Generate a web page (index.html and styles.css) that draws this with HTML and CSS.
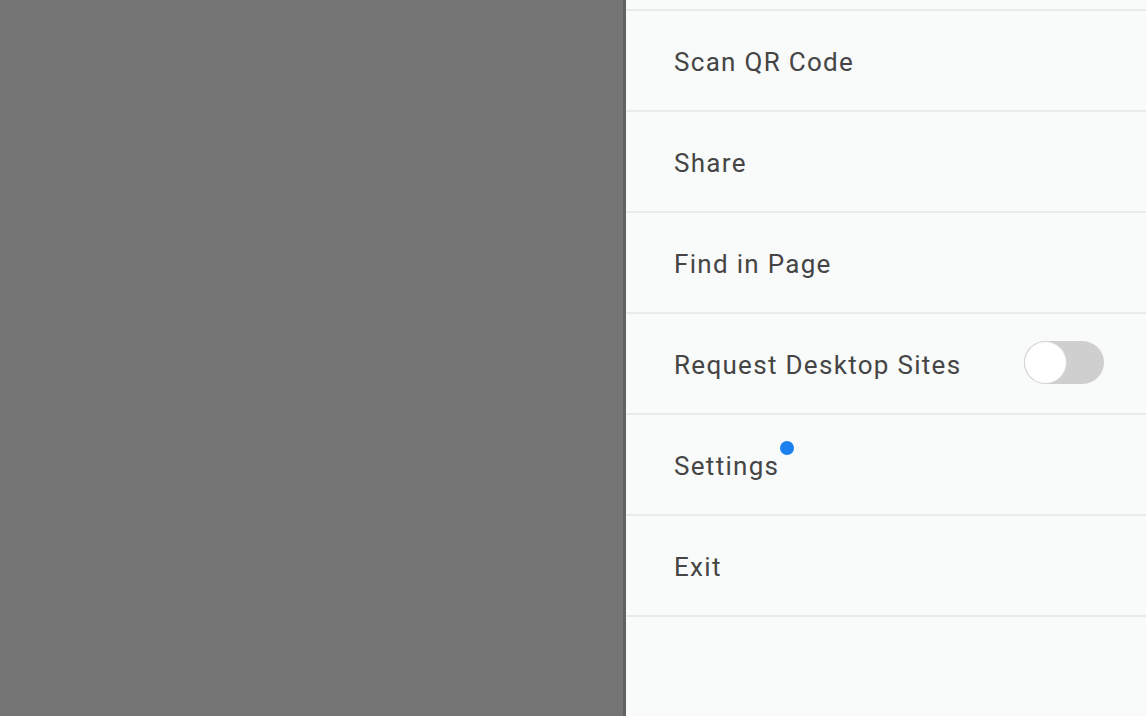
FILE: index.html
```html
<!DOCTYPE html>
<html>
<head>
<meta charset="utf-8">
<link rel="stylesheet" href="styles.css">
</head>
<body>
<div class="screen">
  <div class="scrim"></div>
  <div class="panel">
    <div class="row"><span class="label">Scan QR Code</span></div>
    <div class="row"><span class="label">Share</span></div>
    <div class="row"><span class="label">Find in Page</span></div>
    <div class="row row-toggle"><span class="label">Request Desktop Sites</span><span class="toggle"><span class="knob"></span></span></div>
    <div class="row"><span class="label badge-wrap">Settings<span class="badge"></span></span></div>
    <div class="row"><span class="label">Exit</span></div>
    <div class="row row-empty"></div>
  </div>
</div>
</body>
</html>
```

FILE: styles.css
```css
html, body {
  margin: 0;
  padding: 0;
  width: 1146px;
  height: 716px;
  overflow: hidden;
}
.screen {
  display: flex;
  width: 1146px;
  height: 716px;
  font-family: Roboto, "Noto Sans", sans-serif;
}
.scrim {
  width: 623px;
  background: #757575;
  flex: none;
}
.panel {
  flex: 1;
  background: #f9fafa;
  border-left: 3px solid #626262;
  padding-top: 9px;
  display: flex;
  flex-direction: column;
}
.row {
  height: 99px;
  border-top: 2px solid #e9eaea;
  display: flex;
  align-items: center;
  justify-content: space-between;
  padding: 0 42px 0 48px;
  flex: none;
}
.row-empty {
  flex: 1;
}
.label {
  font-size: 26px;
  color: #454545;
  letter-spacing: 1.3px;
  margin-top: 3px;
}
.badge-wrap {
  position: relative;
}
.badge {
  position: absolute;
  right: -15px;
  top: -10px;
  width: 14px;
  height: 14px;
  border-radius: 50%;
  background: #1a80f0;
}
.toggle {
  width: 80px;
  height: 43px;
  margin-top: -3px;
  border-radius: 22px;
  background: #cfcfcf;
  display: flex;
  align-items: center;
  padding: 0 1px;
  box-sizing: border-box;
}
.knob {
  width: 41px;
  height: 41px;
  border-radius: 50%;
  background: #ffffff;
  box-shadow: 0 0 0 1px #d6d6d6;
}
```
